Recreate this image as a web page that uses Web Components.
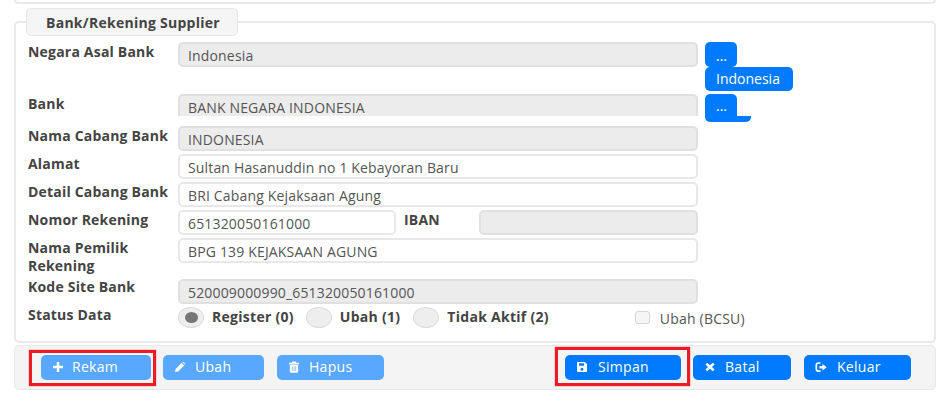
<!DOCTYPE html>
<html><head><meta charset="utf-8"><title>Bank/Rekening Supplier</title>
<style>
html,body{margin:0;padding:0;background:#fff}
body{font:14px/18px "Open Sans",sans-serif;color:#444;width:942px;height:405px;overflow:hidden}
</style></head><body>
<x-page>
  <x-topcard></x-topcard>
  <x-group title="Bank/Rekening Supplier">
    <x-field label="Negara Asal Bank">
      <x-input disabled>Indonesia</x-input>
      <div slot="side" style="display:flex;flex-direction:column;align-items:flex-start">
        <x-btn kind="mini">...</x-btn><x-btn kind="mini" wide>Indonesia</x-btn>
      </div>
    </x-field>
    <x-field label="Bank" clip>
      <x-input disabled>BANK NEGARA INDONESIA</x-input>
      <div slot="side" style="display:flex;flex-direction:column;align-items:flex-start">
        <x-btn kind="mini" cut>...</x-btn><x-btn kind="strip"></x-btn>
      </div>
    </x-field>
    <x-field label="Nama Cabang Bank"><x-input disabled>INDONESIA</x-input></x-field>
    <x-field label="Alamat"><x-input>Sultan Hasanuddin no 1 Kebayoran Baru</x-input></x-field>
    <x-field label="Detail Cabang Bank"><x-input>BRI Cabang Kejaksaan Agung</x-input></x-field>
    <x-field label="Nomor Rekening">
      <div style="display:grid;grid-template-columns:218px 83px 219px;column-gap:0">
        <x-input>651320050161000</x-input>
        <b style="padding:1px 0 0 8px;color:#444;letter-spacing:.2px">IBAN</b>
        <x-input disabled></x-input>
      </div>
    </x-field>
    <x-field label="Nama Pemilik Rekening"><x-input>BPG 139 KEJAKSAAN AGUNG</x-input></x-field>
    <x-field label="Kode Site Bank" tight style="margin-top:4px"><x-input disabled>520009000990_651320050161000</x-input></x-field>
    <x-field label="Status Data" tight>
      <x-status></x-status>
    </x-field>
  </x-group>
  <x-toolbar>
    <div slot="left">
      <x-btn faded mark="rekam" style="width:110px"><x-icon name="plus" style="width:20px"></x-icon>Rekam</x-btn>
      <x-btn faded style="width:101px;margin-left:12px"><x-icon name="pencil"></x-icon>Ubah</x-btn>
      <x-btn faded style="width:107px;margin-left:13px"><x-icon name="trash"></x-icon>Hapus</x-btn>
    </div>
    <div slot="right">
      <x-btn mark="simpan" style="width:116px"><x-icon name="save" style="width:22px"></x-icon>Simpan</x-btn>
      <x-btn style="width:98px;margin-left:12px"><x-icon name="times"></x-icon>Batal</x-btn>
      <x-btn style="width:107px;margin-left:13px"><x-icon name="signout" style="width:22px"></x-icon>Keluar</x-btn>
    </div>
  </x-toolbar>
</x-page>
<script>
function def(name, css, html){
  customElements.define(name, class extends HTMLElement{
    constructor(){super();this.attachShadow({mode:'open'});}
    connectedCallback(){
      this.shadowRoot.innerHTML='<style>'+css+'</style>'+(typeof html==='function'?html(this):html);
    }
  });
}
def('x-page',':host{display:block;padding:0 6px 0 14px}','<slot></slot>');
def('x-topcard',':host{display:block;height:2px;border:2px solid #e9e9e9;border-top:0;border-radius:0 0 5px 5px;margin-bottom:4px}','');
def('x-group',`:host{display:block}
fieldset{margin:0;border:2px solid #e9e9e9;border-radius:5px;padding:6px 0 10px 12px;min-width:0;height:auto}
legend{box-sizing:border-box;height:28px;width:212px;margin-left:-2px;padding:5px 0 0 19px;background:#f5f5f5;border:1px solid #e6e6e6;border-radius:5px;font-weight:700;color:#444;line-height:18px;white-space:nowrap;letter-spacing:.27px}`,
 h=>`<fieldset><legend>${h.getAttribute('title')}</legend><slot></slot></fieldset>`);
def('x-field',`:host{display:grid;grid-template-columns:150px 520px auto;column-gap:0;margin-bottom:3px;align-items:start}
.l{font-weight:700;color:#444;line-height:18px;padding:1px 6px 0 0;letter-spacing:.2px}
:host([tight]) .l{padding-top:0;margin-top:-1px}
.s{margin-left:7px}
:host([clip]) .c{height:22px;overflow:hidden}
:host([clip]){margin-bottom:4px}`,
 h=>`<div class="l">${h.getAttribute('label')}</div><div class="c"><slot></slot></div><div class="s"><slot name="side"></slot></div>`);
def('x-input',`:host{display:block;box-sizing:border-box;height:25px;border:2px solid #e8e8e8;border-radius:5px;background:#fff;color:#555;padding:3px 0 0 8px;line-height:18px;white-space:nowrap;overflow:hidden;letter-spacing:.16px}
:host([disabled]){background:#ececec;border-color:#e0e0e0}`,'<slot></slot>');
def('x-btn',`:host{display:inline-flex;position:relative;box-sizing:border-box;height:25px;align-items:center;background:#007bff;color:#fff;border-radius:5px;padding:0 0 2px 11px;white-space:nowrap;line-height:18px;letter-spacing:.3px}
:host([faded]){background:#59a8ff}
:host([kind=mini]){width:32px;padding:2px 0 0 11px;justify-content:flex-start;letter-spacing:0}
:host([kind=mini][wide]){width:88px;height:24px;padding:0 0 0 11px;margin-top:0}
:host([cut]){height:22px;border-radius:5px 5px 0 0}
:host([kind=strip]){width:46px;height:6px;padding:0;border-radius:0 0 5px 5px}
.m{position:absolute;border:3px solid #ed1c24;box-shadow:0 0 1px #ed1c24;pointer-events:none}
:host([mark=rekam]) .m{left:-12px;top:-5px;width:121px;height:30px}
:host([mark=simpan]) .m{left:-10px;top:-8px;width:129px;height:33px}`,
 h=>`<slot></slot>${h.hasAttribute('mark')?'<span class="m"></span>':''}`);
const I={
 plus:'<path d="M4.800 1h2.400v3.800H11v2.400H7.200V11H4.800V7.200H1V4.800h3.800z"/>',
 pencil:'<path d="M1 11l.6-3L7.600 2l2.600 2.600-6 6zM8.400 1.200l.7-.5 2.400 2.400-.5.7z"/>',
 trash:'<path d="M4.200 .6h3.600l.5 1.100H11v1.500H1V1.700h2.700zM1.800 3.800h8.400v6.500c0 .9-.6 1.500-1.400 1.500H3.200c-.8 0-1.400-.6-1.400-1.500zm2.100 1.400v4.900h.6V5.200zm1.800 0v4.900h.6V5.200zm1.800 0v4.900h.6V5.200z" fill-rule="evenodd"/>',
 save:'<path fill-rule="evenodd" d="M1.600 1h7.200L11 3.200v6.700c0 .7-.5 1.100-1.100 1.100H2.100C1.500 11 1 10.600 1 9.900V2.100C1 1.500 1.100 1 1.600 1zM3 2.200V4.700h5V2.200zM6 6.700a1.500 1.500 0 100 3 1.500 1.500 0 000-3z"/>',
 times:'<path d="M3.200 1.800L6 4.300l2.800-2.500 1.700 1.700L8 6l2.500 2.500-1.700 1.700L6 7.700l-2.800 2.500-1.700-1.700L4 6 1.500 3.500z"/>',
 signout:'<path d="M7.500 3L11.700 6.200 7.500 9.400V7.500H4.500V4.900h3z"/><path d="M5.500 2H3.400C2.200 2 1.300 3 1.300 4.200v3.700c0 1.300.9 2.200 2.100 2.200h2.100" fill="none" stroke="#fff" stroke-width="1.700"/>'
};
def('x-icon',`:host{display:inline-block;width:21px;height:12px;flex:none}svg{display:block;width:12px;height:12px;fill:#fff}`,
 h=>`<svg viewBox="0 0 12 12" aria-hidden="true">${I[h.getAttribute('name')]}</svg>`);
def('x-status',`:host{display:flex;align-items:center;height:21px;font-weight:700;color:#444;white-space:nowrap;letter-spacing:.28px}
.r{box-sizing:border-box;width:26px;height:21px;border:1px solid #dcdcdc;border-radius:50%;background:#eee;flex:none;display:grid;place-items:center}
.r.on::after{content:"";width:13px;height:11px;border-radius:50%;background:#777}
.t{margin:-2px 13px 0 8px}
.k{box-sizing:border-box;width:15px;height:13px;border:1px solid #d5d5d5;border-radius:3px;background:#f5f5f5;flex:none;margin:0 10px 0 0}
.u{font-weight:400;color:#555;margin-top:3px;letter-spacing:.2px}`,
`<span class="r on"></span><span class="t" style="margin-right:12px">Register (0)</span><span class="r"></span><span class="t">Ubah (1)</span><span class="r"></span><span class="t" style="margin-right:86px">Tidak Aktif (2)</span><span class="k"></span><span class="u">Ubah (BCSU)</span>`);
def('x-toolbar',`:host{display:flex;justify-content:space-between;box-sizing:border-box;height:45px;margin-top:2px;padding:9px 24px 0 26px;background:#f4f4f4;border:1px solid #e8e8e8;border-radius:5px}
::slotted(div){display:flex}`,'<slot name="left"></slot><slot name="right"></slot>');
</script>
</body></html>
